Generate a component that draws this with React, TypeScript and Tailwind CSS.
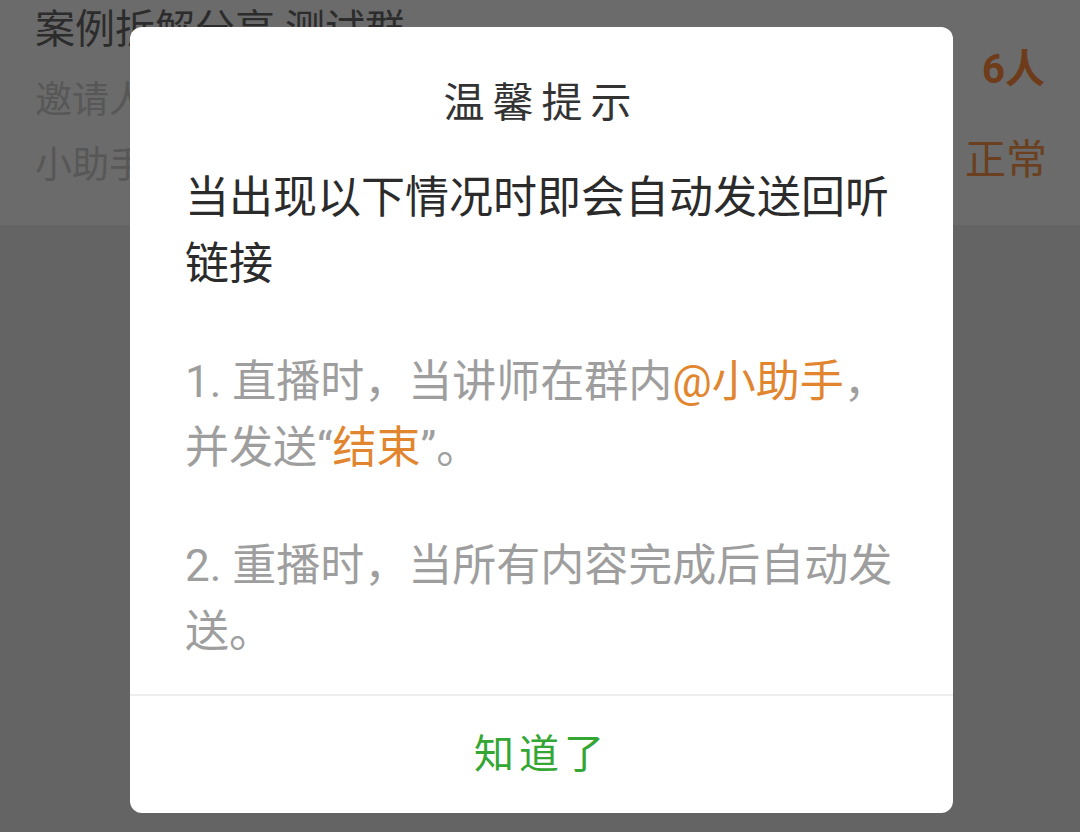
import React from 'react';

export default function App() {
  return (
    <div className="relative h-[832px] w-full overflow-hidden bg-[#646464] font-['Roboto','Noto_Sans_CJK_SC',sans-serif]">
      {/* List item behind the dialog (dimmed) */}
      <div className="flex h-[225px] justify-between bg-[#6b6b6b] px-[35px]">
        <div className="flex flex-col pt-[6px]">
          <div className="text-[40px] leading-[48px] text-[#2c2c2c] whitespace-nowrap">案例拆解分享 测试群</div>
          <div className="mt-[14px] text-[37px] leading-[65px] text-[#575757] whitespace-nowrap">邀请人：管理员</div>
          <div className="text-[37px] leading-[65px] text-[#575757] whitespace-nowrap">小助手状态</div>
        </div>
        <div className="flex flex-col items-end pt-[42px]">
          <div className="text-[40px] font-bold leading-[56px] text-[#6e3c1a]">6人</div>
          <div className="mt-[34px] -mr-[2px] text-[41px] leading-[56px] text-[#6a4020]">正常</div>
        </div>
      </div>

      {/* Dialog */}
      <div className="absolute inset-0 flex justify-center pt-[27px]">
        <div className="ml-[3px] flex h-[786px] w-[823px] flex-col rounded-[12px] bg-white">
          <div className="px-[55px] pt-[51px]">
            <div className="text-center text-[41px] leading-[50px] tracking-[8px] text-[#333333]">温馨提示</div>
            <p className="mt-[37px] text-[44px] leading-[66px] text-[#2b2b2b]">
              当出现以下情况时即会自动发送回听
              <br />
              链接
            </p>
            <p className="mt-[52px] text-[44px] leading-[66px] text-[#9e9e9e]">
              1. 直播时，当讲师在群内<span className="text-[#e2852f]">@小助手</span>，
              <br />
              并发送“<span className="text-[#e2852f]">结束</span>”。
            </p>
            <p className="mt-[52px] text-[44px] leading-[66px] text-[#9e9e9e]">
              2. 重播时，当所有内容完成后自动发
              <br />
              送。
            </p>
          </div>
          <div className="flex-1" />
          <div className="h-[2px] bg-[#eeeeee]" />
          <button className="flex h-[117px] items-center justify-center text-[40px] tracking-[5px] text-[#33a633]">
            知道了
          </button>
        </div>
      </div>
    </div>
  );
}
